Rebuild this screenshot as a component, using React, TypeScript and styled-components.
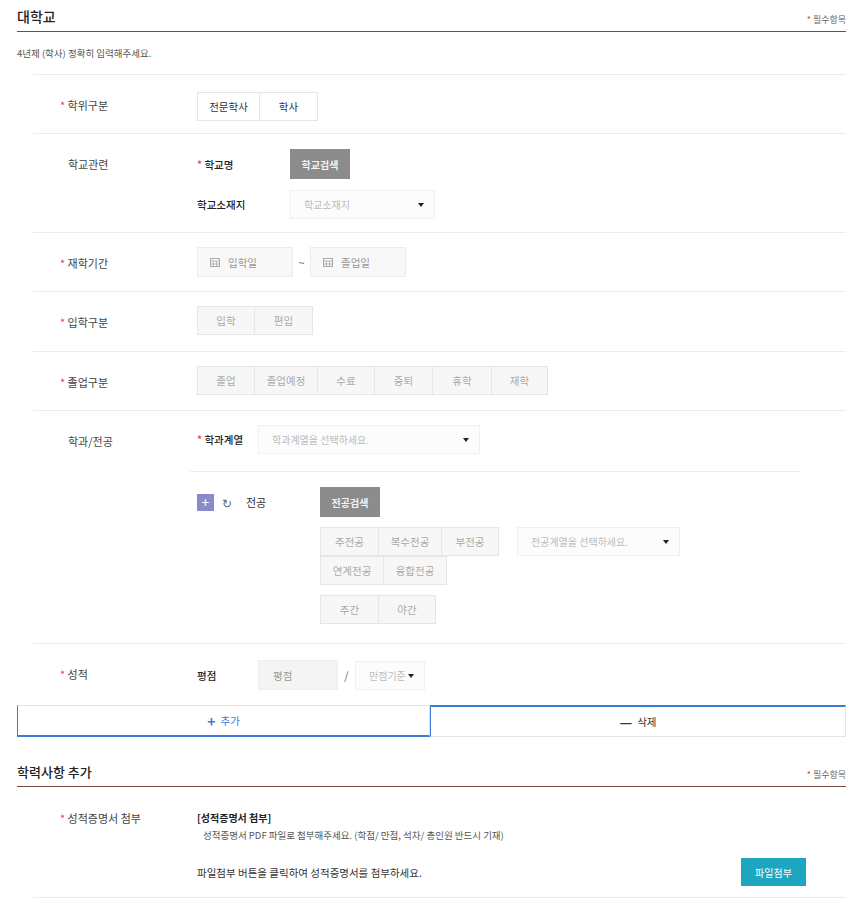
import React from 'react';
import styled, { createGlobalStyle } from 'styled-components';

const Global = createGlobalStyle`
  body { margin: 0; background: #fff; font-family: "Noto Sans CJK KR", "Noto Sans", sans-serif; color: #333; font-size: 11px; }
  * { box-sizing: border-box; }
`;

const Page = styled.div`
  width: 856px;
  padding: 0 10px 0 17px;
`;

const SectionHead = styled.div<{ top?: number }>`
  display: flex;
  justify-content: space-between;
  align-items: flex-end;
  height: ${({ top }) => top || 32}px;
  border-bottom: 1px solid #7a4a3a;
  padding-bottom: 5px;
`;

const Title = styled.h2`
  margin: 0;
  font-size: 14px;
  font-weight: 500;
  color: #222;
`;

const Req = styled.span`
  font-size: 9px;
  color: #666;
  &::before { content: '* '; color: #e0474c; }
`;

const Notice = styled.p`
  margin: 14px 0 0;
  font-size: 9.5px;
  color: #555;
  height: 28px;
`;

const Rows = styled.div`
  margin-left: 16px;
`;

const Row = styled.div<{ h: number; last?: boolean }>`
  display: flex;
  height: ${({ h }) => h}px;
  border-top: 1px solid #ececec;
  border-bottom: ${({ last }) => (last ? '1px solid #ececec' : 'none')};
`;

const Label = styled.div<{ req?: boolean; pt?: number }>`
  flex: 0 0 164px;
  padding: ${({ pt }) => pt ?? 22}px 0 0 ${({ req }) => (req ? 27 : 35)}px;
  font-size: 11px;
  color: #444;
  &::before {
    content: ${({ req }) => (req ? "'* '" : "''")};
    color: #e0474c;
  }
`;

const Body = styled.div<{ pt?: number }>`
  flex: 1;
  padding-top: ${({ pt }) => pt ?? 16}px;
`;

const Seg = styled.div`
  display: flex;
`;

const SegBtn = styled.div<{ w: number; dim?: boolean }>`
  width: ${({ w }) => w}px;
  height: 29px;
  display: flex;
  align-items: center;
  justify-content: center;
  border: 1px solid #e6e6e6;
  margin-left: -1px;
  background: ${({ dim }) => (dim ? '#f7f7f7' : '#fff')};
  color: ${({ dim }) => (dim ? '#aaa' : '#333')};
  font-size: 10.5px;
  &:first-child { margin-left: 0; }
`;

const SubRow = styled.div<{ mt?: number }>`
  display: flex;
  align-items: center;
  margin-top: ${({ mt }) => mt || 0}px;
`;

const SubLabel = styled.div<{ w: number; req?: boolean }>`
  width: ${({ w }) => w}px;
  font-size: 10.5px;
  font-weight: 500;
  color: #222;
  &::before {
    content: ${({ req }) => (req ? "'* '" : "''")};
    color: #e0474c;
  }
`;

const GrayBtn = styled.div`
  width: 60px;
  height: 30px;
  display: flex;
  align-items: center;
  justify-content: center;
  background: #8c8c8c;
  color: #f4f4f4;
  font-size: 10px;
  font-weight: 600;
`;

const Select = styled.div<{ w: number }>`
  width: ${({ w }) => w}px;
  height: 29px;
  display: flex;
  align-items: center;
  justify-content: space-between;
  padding: 0 10px 0 13px;
  border: 1px solid #f0f0f0;
  background: #fcfcfc;
  color: #bbb;
  font-size: 10px;
  &::after { content: ''; border: 3.5px solid transparent; border-top: 4px solid #222; margin-top: 4px; }
`;

const DateBox = styled.div`
  width: 96px;
  height: 30px;
  display: flex;
  align-items: center;
  gap: 8px;
  padding-left: 12px;
  border: 1px solid #ececec;
  background: #f8f8f8;
  color: #999;
  font-size: 10.5px;
`;

const Tilde = styled.span`
  width: 17px;
  text-align: center;
  color: #666;
`;

const Inner = styled.div`
  border-top: 1px solid #ececec;
  margin: 17px 46px 0 -7px;
  padding: 15px 0 0 7px;
`;

const PlusBtn = styled.div`
  width: 17px;
  height: 17px;
  background: #8a8acb;
  color: #fff;
  display: flex;
  align-items: center;
  justify-content: center;
  font-size: 14px;
  line-height: 1;
`;

const Tools = styled.div`
  width: 123px;
  display: flex;
  align-items: center;
  gap: 8px;
  font-size: 11px;
`;

const MajorGrid = styled.div`
  margin-left: 123px;
  margin-top: 10px;
`;

const Score = styled.div`
  width: 80px;
  height: 30px;
  padding-left: 14px;
  display: flex;
  align-items: center;
  background: #f4f4f4;
  border: 1px solid #eee;
  color: #999;
  font-size: 10.5px;
`;

const Actions = styled.div`
  display: flex;
  margin-top: 16px;
  height: 32px;
`;

const AddBtn = styled.div`
  flex: 0 0 413px;
  display: flex;
  align-items: center;
  justify-content: center;
  gap: 5px;
  border: 1px solid #e5e5e5;
  border-left: 1px solid #3a7bd5;
  border-bottom: 2px solid #3a7bd5;
  color: #3a7bd5;
  font-size: 10.5px;
`;

const DelBtn = styled.div`
  flex: 1;
  display: flex;
  align-items: center;
  justify-content: center;
  gap: 5px;
  border: 1px solid #e5e5e5;
  border-top: 2px solid #3a7bd5;
  border-left: 1px solid #3a7bd5;
  color: #333;
  font-size: 10.5px;
`;

const Strong = styled.div`
  font-weight: 700;
  font-size: 10px;
  color: #222;
`;

const Desc = styled.div`
  margin: 3px 0 0 6px;
  font-size: 9.5px;
  color: #555;
`;

const FileLine = styled.div`
  display: flex;
  align-items: center;
  justify-content: space-between;
  margin-top: 16px;
  padding-right: 40px;
  font-size: 10.5px;
`;

const TealBtn = styled.div`
  width: 65px;
  height: 28px;
  display: flex;
  align-items: center;
  justify-content: center;
  background: #1ea5bf;
  color: #fff;
  font-size: 10px;
`;

const Cal = () => (
  <svg width="10" height="9" viewBox="0 0 10 9">
    <rect x="0.5" y="0.5" width="9" height="8" fill="none" stroke="#aaa" />
    <path d="M0 3h10M3.3 3v6M6.6 3v6M0 6h10" stroke="#aaa" strokeWidth="0.8" />
  </svg>
);

export default function App() {
  return (
    <Page>
      <Global />
      <SectionHead>
        <Title>대학교</Title>
        <Req>필수항목</Req>
      </SectionHead>
      <Notice>4년제 (학사) 정확히 입력해주세요.</Notice>
      <Rows>
        <Row h={59}>
          <Label req>학위구분</Label>
          <Body pt={17}>
            <Seg>
              <SegBtn w={63}>전문학사</SegBtn>
              <SegBtn w={59}>학사</SegBtn>
            </Seg>
          </Body>
        </Row>
        <Row h={99}>
          <Label>학교관련</Label>
          <Body pt={15}>
            <SubRow>
              <SubLabel w={93} req>학교명</SubLabel>
              <GrayBtn>학교검색</GrayBtn>
            </SubRow>
            <SubRow mt={11}>
              <SubLabel w={93}>학교소재지</SubLabel>
              <Select w={145}>학교소재지</Select>
            </SubRow>
          </Body>
        </Row>
        <Row h={59}>
          <Label req>재학기간</Label>
          <Body pt={14}>
            <SubRow>
              <DateBox><Cal />입학일</DateBox>
              <Tilde>~</Tilde>
              <DateBox><Cal />졸업일</DateBox>
            </SubRow>
          </Body>
        </Row>
        <Row h={60}>
          <Label req>입학구분</Label>
          <Body pt={14}>
            <Seg>
              <SegBtn w={58} dim>입학</SegBtn>
              <SegBtn w={59} dim>편입</SegBtn>
            </Seg>
          </Body>
        </Row>
        <Row h={59}>
          <Label req>졸업구분</Label>
          <Body pt={14}>
            <Seg>
              {[['졸업', 58], ['졸업예정', 64], ['수료', 58], ['중퇴', 59], ['휴학', 60], ['재학', 57]].map(([t, w]) => (
                <SegBtn key={t as string} w={w as number} dim>{t}</SegBtn>
              ))}
            </Seg>
          </Body>
        </Row>
        <Row h={233}>
          <Label pt={22}>학과/전공</Label>
          <Body pt={14}>
            <SubRow>
              <SubLabel w={61} req>학과계열</SubLabel>
              <Select w={222}>학과계열을 선택하세요.</Select>
            </SubRow>
            <Inner>
              <SubRow>
                <Tools>
                  <PlusBtn>+</PlusBtn>
                  <span style={{ color: '#666', fontSize: 12 }}>↻</span>
                  <span style={{ marginLeft: 6 }}>전공</span>
                </Tools>
                <GrayBtn>전공검색</GrayBtn>
              </SubRow>
            </Inner>
            <MajorGrid>
              <SubRow>
                <SegBtn w={59} dim>주전공</SegBtn>
                <SegBtn w={64} dim>복수전공</SegBtn>
                <SegBtn w={58} dim>부전공</SegBtn>
                <div style={{ width: 18 }} />
                <Select w={163}>전공계열을 선택하세요.</Select>
              </SubRow>
              <SubRow>
                <SegBtn w={64} dim>연계전공</SegBtn>
                <SegBtn w={64} dim>융합전공</SegBtn>
              </SubRow>
              <SubRow mt={10}>
                <SegBtn w={59} dim>주간</SegBtn>
                <SegBtn w={58} dim>야간</SegBtn>
              </SubRow>
            </MajorGrid>
          </Body>
        </Row>
        <Row h={46}>
          <Label req pt={22}>성적</Label>
          <Body pt={16}>
            <SubRow>
              <SubLabel w={61}>평점</SubLabel>
              <Score>평점</Score>
              <Tilde>/</Tilde>
              <Select w={70}>만점기준</Select>
            </SubRow>
          </Body>
        </Row>
      </Rows>
      <Actions>
        <AddBtn><b style={{ fontSize: 14 }}>+</b> 추가</AddBtn>
        <DelBtn><b style={{ fontSize: 14 }}>—</b> 삭제</DelBtn>
      </Actions>
      <SectionHead top={50}>
        <Title style={{ fontSize: 13 }}>학력사항 추가</Title>
        <Req>필수항목</Req>
      </SectionHead>
      <Rows>
        <Row h={111} last style={{ borderTop: 'none' }}>
          <Label req pt={23}>성적증명서 첨부</Label>
          <Body pt={23}>
            <Strong>[성적증명서 첨부]</Strong>
            <Desc>성적증명서 PDF 파일로 첨부해주세요. (학점/ 만점, 석차/ 총인원 반드시 기재)</Desc>
            <FileLine>
              <span>파일첨부 버튼을 클릭하여 성적증명서를 첨부하세요.</span>
              <TealBtn>파일첨부</TealBtn>
            </FileLine>
          </Body>
        </Row>
      </Rows>
    </Page>
  );
}
